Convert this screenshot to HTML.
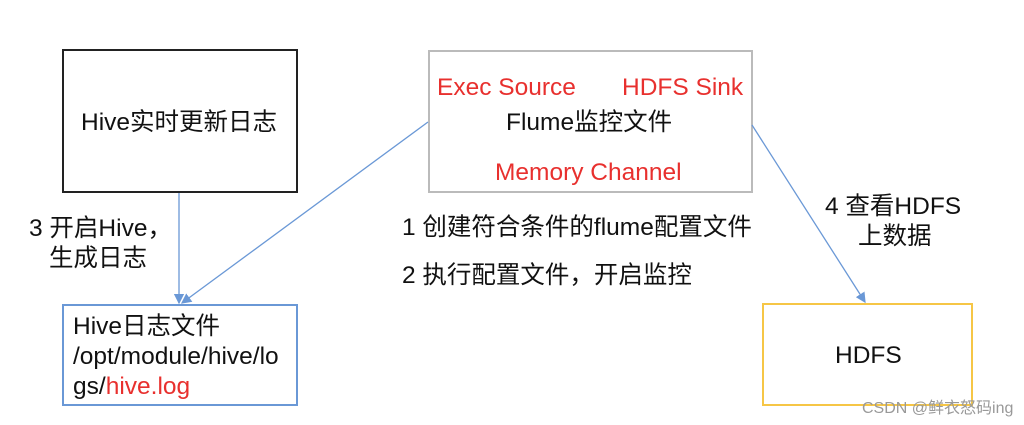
<!DOCTYPE html>
<html><head><meta charset="utf-8"><style>
body{margin:0;width:1024px;height:425px;background:#fff;position:relative;overflow:hidden;font-family:"Liberation Sans","Noto Sans CJK SC",sans-serif;font-size:24.5px;color:#111}
.b{position:absolute;box-sizing:border-box}
.t{position:absolute;white-space:nowrap;line-height:1}
.r{color:#e8302e}
</style></head><body>
<div class="b" style="left:62px;top:49px;width:236px;height:144px;border:2px solid #222"></div>
<div class="b" style="left:428px;top:50px;width:325px;height:143px;border:2px solid #bbb"></div>
<div class="b" style="left:62px;top:304px;width:236px;height:102px;border:2px solid #6a98d6"></div>
<div class="b" style="left:762px;top:303px;width:211px;height:103px;border:2px solid #f6c646"></div>
<svg class="b" style="left:0;top:0" width="1024" height="425">
<defs><marker id="a" markerWidth="8" markerHeight="8" refX="7" refY="4" orient="auto"><path d="M0,0 L8,4 L0,8z" fill="#6a98d6"/></marker></defs>
<g stroke="#6a98d6" stroke-width="1.3" fill="none">
<line x1="179" y1="193" x2="179" y2="303" marker-end="url(#a)"/>
<line x1="428" y1="122" x2="182" y2="303" marker-end="url(#a)"/>
<line x1="752" y1="125" x2="865" y2="302" marker-end="url(#a)"/>
</g></svg>
<div class="t" style="left:81px;top:111px">Hive实时更新日志</div>
<div class="t r" style="left:437px;top:76px">Exec Source</div>
<div class="t r" style="left:622px;top:76px">HDFS Sink</div>
<div class="t" style="left:506px;top:111px">Flume监控文件</div>
<div class="t r" style="left:495px;top:161px">Memory Channel</div>
<div class="t" style="left:29px;top:217px">3 开启Hive，</div>
<div class="t" style="left:49px;top:247px">生成日志</div>
<div class="t" style="left:402px;top:216px">1 创建符合条件的flume配置文件</div>
<div class="t" style="left:402px;top:264px">2 执行配置文件，开启监控</div>
<div class="t" style="left:825px;top:195px">4 查看HDFS</div>
<div class="t" style="left:858px;top:225px">上数据</div>
<div class="t" style="left:73px;top:315px">Hive日志文件</div>
<div class="t" style="left:73px;top:345px">/opt/module/hive/lo</div>
<div class="t" style="left:73px;top:375px">gs/<span class="r">hive.log</span></div>
<div class="t" style="left:835px;top:344px">HDFS</div>
<div class="t" style="left:862px;top:401px;font-size:16px;color:#999">CSDN @鲜衣怒码ing</div>
</body></html>
